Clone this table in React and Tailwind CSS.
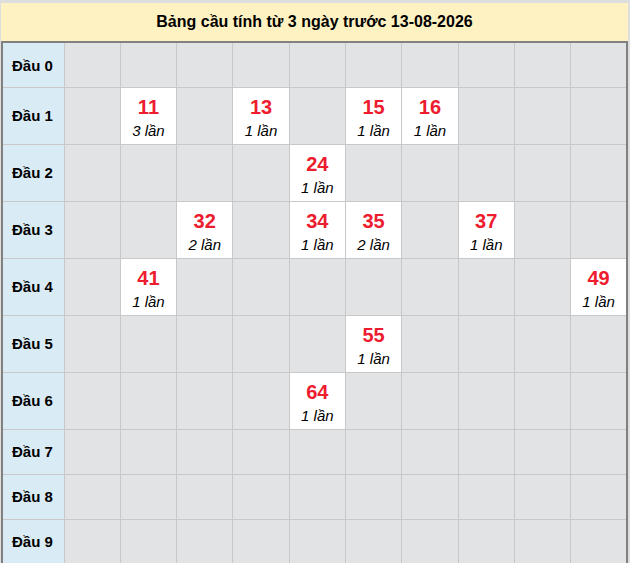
import React from "react";

const counts = {
  11: 3, 13: 1, 15: 1, 16: 1,
  24: 1,
  32: 2, 34: 1, 35: 2, 37: 1,
  41: 1, 49: 1,
  55: 1,
  64: 1,
};

const rowHasNumbers = (head) =>
  Object.keys(counts).some((k) => Math.floor(Number(k) / 10) === head);

const App = () => {
  const heads = [0, 1, 2, 3, 4, 5, 6, 7, 8, 9];
  const tails = [0, 1, 2, 3, 4, 5, 6, 7, 8, 9];

  return (
    <div className="min-h-[563px] bg-[#dedede] pt-[3px] pl-[1px] font-['Liberation_Sans',Arial,sans-serif]">
      <div className="w-[627px]">
        <div className="h-[38px] bg-[#fff2c2] flex items-center justify-center text-[16px] font-bold text-black">
          Bảng cầu tính từ 3 ngày trước 13-08-2026
        </div>
        <table className="w-[627px] table-fixed border-collapse border-2 border-[#808080]">
          <colgroup>
            <col className="w-[62px]" />
            {tails.map((t) => (
              <col key={t} />
            ))}
          </colgroup>
          <tbody>
            {heads.map((h) => {
              const tall = rowHasNumbers(h);
              return (
                <tr key={h} className={tall ? "h-[57px]" : "h-[45px]"}>
                  <td className="bg-[#d9ecf5] border border-[#c8c8c8] pl-[9px] pt-[2px] text-[15px] font-bold text-black">
                    Đầu {h}
                  </td>
                  {tails.map((t) => {
                    const n = h * 10 + t;
                    const c = counts[n];
                    return c ? (
                      <td key={t} className="bg-white border border-[#c8c8c8] text-center align-top p-0 pt-[6px]">
                        <div className="text-[20px] font-bold leading-[26px] text-[#ed1c2e]">
                          {String(n).padStart(2, "0")}
                        </div>
                        <div className="text-[15px] italic leading-[22px] text-black">{c} lần</div>
                      </td>
                    ) : (
                      <td key={t} className="bg-[#e2e3e5] border border-[#c8c8c8]" />
                    );
                  })}
                </tr>
              );
            })}
          </tbody>
        </table>
      </div>
    </div>
  );
};

export default App;
